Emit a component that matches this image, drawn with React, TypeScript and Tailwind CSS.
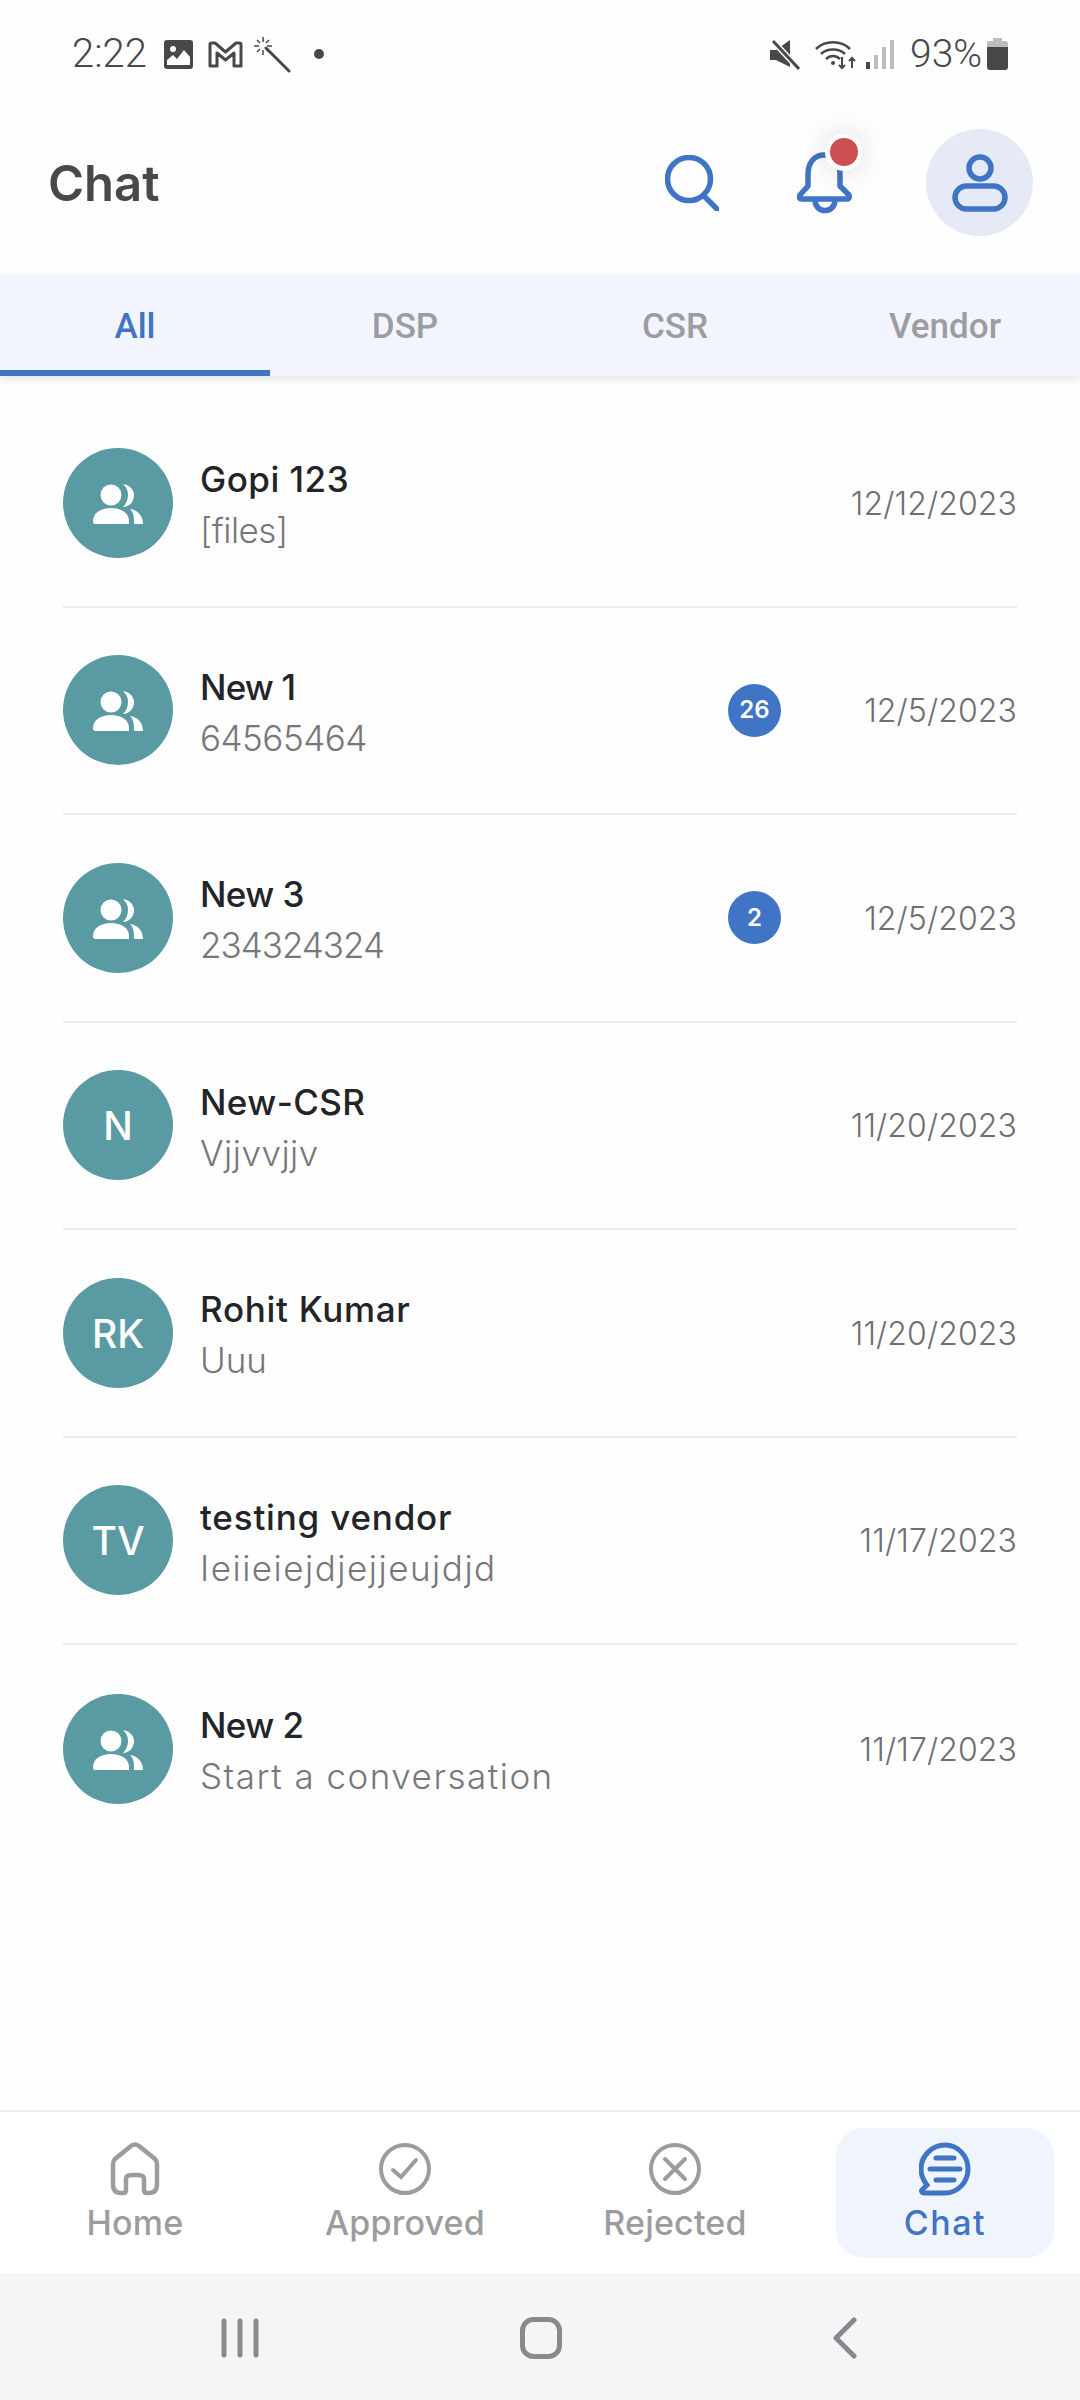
import React from 'react';

const chats = [
  { name: 'Gopi 123', sub: '[files]', date: '12/12/2023', nameTrack: 'tracking-[0.5px]', subTrack: 'tracking-[-0.5px]' },
  { name: 'New 1', sub: '64565464', date: '12/5/2023', badge: '26', nameTrack: 'tracking-[-0.8px]', subTrack: 'tracking-[-0.5px]' },
  { name: 'New 3', sub: '234324324', date: '12/5/2023', badge: '2', nameTrack: 'tracking-[-0.6px]', subTrack: 'tracking-[-1px]' },
  { name: 'New-CSR', sub: 'Vjjvvjjv', date: '11/20/2023', initials: 'N', nameTrack: 'tracking-[0.4px]', subTrack: 'tracking-[0.5px]' },
  { name: 'Rohit Kumar', sub: 'Uuu', date: '11/20/2023', initials: 'RK', nameTrack: 'tracking-[0.7px]', subTrack: 'tracking-[0px]' },
  { name: 'testing vendor', sub: 'Ieiieiejdjejjeujdjd', date: '11/17/2023', initials: 'TV', nameTrack: 'tracking-[0.8px]', subTrack: 'tracking-[1.5px]' },
  { name: 'New 2', sub: 'Start a conversation', date: '11/17/2023', nameTrack: 'tracking-[-0.6px]', subTrack: 'tracking-[1.5px]' },
];

function GroupIcon(): React.ReactElement {
  return (
    <svg width="50" height="40" viewBox="0 0 50 40" fill="#ffffff">
      <circle cx="18" cy="11" r="10.5" />
      <path d="M2 40Q0 40 0 37C0 29 8 24 18 24C28 24 36 29 36 37V40Z" />
      <path d="M30 0C36 1 41 5 41 11C41 18 36 23 30 23C33 20 35 16 35 11C35 6 33 3 30 0Z" />
      <path d="M37 25C44 26 50 31 50 40H41C41 33 41 29 37 25Z" />
    </svg>
  );
}

function StatusLeft(): React.ReactElement {
  return (
    <div className="flex items-center">
      <span className="ml-[72px] w-[92px] text-[40px] leading-none text-[#48484a] font-['Roboto',sans-serif] font-light">2:22</span>
      <svg width="29" height="29" viewBox="0 0 29 29" className="mr-[15px]">
        <rect width="29" height="29" rx="3" fill="#48484a" />
        <circle cx="9" cy="9" r="3" fill="#fff" />
        <path d="M3 25V20L9 15L13 19L20 10L26 17V25Z" fill="#fff" />
      </svg>
      <svg width="35" height="27" viewBox="0 0 35 27" fill="none" stroke="#48484a" strokeWidth="3" strokeLinejoin="round" className="mr-[10px]">
        <path d="M2 3Q2 2 4 2H7L17.500 11L28 2H31Q33 2 33 3V25H26V12L17.500 19L9 12V25H2Z" />
      </svg>
      <svg width="38" height="37" viewBox="0 0 38 37" fill="none" stroke="#48484a" className="mr-[23px]">
        <path d="M13 12L36 35" strokeWidth="3" strokeLinecap="round" />
        <path d="M10 1V6M10 14V19M1 10H6M14 10H19M4 4L7 7M13 13L16 16M16 4L13 7M4 16L7 13" strokeWidth="1.500" />
      </svg>
      <span className="w-[10px] h-[10px] rounded-full bg-[#48484a]" />
    </div>
  );
}

function StatusRight(): React.ReactElement {
  return (
    <div className="flex items-center mr-[72px]">
      <svg width="30" height="31" viewBox="0 0 30 31" className="mr-[15px]">
        <path d="M0 11H6L20 1V28L6 21H0Z" fill="#48484a" />
        <path d="M3 2L29 30" stroke="#fff" strokeWidth="6" />
        <path d="M3 2L29 30" stroke="#48484a" strokeWidth="3" />
      </svg>
      <svg width="42" height="31" viewBox="0 0 42 31" fill="none" stroke="#48484a" strokeWidth="2.500" className="mr-[9px]">
        <path d="M1 10C10 1 26 1 35 10" />
        <path d="M6 15C12 9 24 9 30 15" />
        <path d="M11 20C15 16 21 16 25 20" />
        <circle cx="18" cy="24" r="2" fill="#48484a" stroke="none" />
        <path d="M27 18V29M24 26L27 29L30 26M37 29V19M34 22L37 19L40 22" strokeWidth="2" />
      </svg>
      <div className="flex items-end gap-[4px] h-[29px] mr-[16px]">
        <span className="w-[4px] h-[7px] bg-[#48484a]" />
        <span className="w-[4px] h-[14px] bg-[#bdbdbf]" />
        <span className="w-[4px] h-[22px] bg-[#bdbdbf]" />
        <span className="w-[4px] h-[29px] bg-[#bdbdbf]" />
      </div>
      <span className="w-[77px] text-[39px] leading-none text-[#48484a] font-['Roboto',sans-serif] font-light">93%</span>
      <svg width="21" height="32" viewBox="0 0 21 32">
        <path d="M6 0H15V3H19Q21 3 21 5V9H0V5Q0 3 2 3H6Z" fill="#bdbdbf" />
        <path d="M0 9H21V29Q21 32 18 32H3Q0 32 0 29Z" fill="#48484a" />
      </svg>
    </div>
  );
}

function NavItem({ label, active, children }: { label: string; active?: boolean; children: React.ReactNode }): React.ReactElement {
  return (
    <div className="flex justify-center">
      <div className={`w-[218px] h-[130px] rounded-[28px] pt-[14px] flex flex-col items-center ${active ? 'bg-[#f0f4fc] text-[#3f75c4] tracking-[1.5px]' : 'text-[#9c9c9f] tracking-[0.2px]'}`}>
        <div className="h-[54px] flex items-center">{children}</div>
        <span className="mt-[7px] text-[34px] leading-[40px] font-medium font-['Inter',sans-serif]">{label}</span>
      </div>
    </div>
  );
}

export default function App(): React.ReactElement {
  return (
    <div className="w-[1080px] h-[2400px] flex flex-col bg-[#fefefe] overflow-hidden font-['Inter',sans-serif]">
      <div className="h-[108px] flex items-center justify-between">
        <StatusLeft />
        <StatusRight />
      </div>

      <div className="h-[167px] flex items-center pl-[48px] pr-[47px] pb-[18px]">
        <h1 className="flex-1 text-[49px] font-semibold text-[#48484a] leading-none pt-[2px]">Chat</h1>
        <svg width="54" height="56" viewBox="0 0 54 56" fill="none" stroke="#3f75c4" strokeWidth="5.500" strokeLinecap="round" className="mr-[78px]">
          <circle cx="24" cy="24" r="21.500" />
          <path d="M39 41L52 54" />
        </svg>
        <div className="relative w-[56px] h-[62px] mr-[73px]">
          <svg width="56" height="62" viewBox="0 0 56 62" fill="none" stroke="#3f75c4" strokeWidth="5.500" strokeLinejoin="round">
            <path d="M11 34V22C11 10 18 3 27 3C36 3 43 10 43 22V34L52 43Q53 47 50 47H5Q1 47 3 43Z" />
            <path d="M18 48C18 62 38 62 38 48" />
          </svg>
          <span className="absolute left-[28px] top-[-18px] w-[37px] h-[37px] rounded-full bg-white flex items-center justify-center shadow-[0_0_30px_rgba(0,0,0,0.14)]">
            <span className="w-[28px] h-[28px] rounded-full bg-[#cc4f52]" />
          </span>
        </div>
        <div className="w-[107px] h-[107px] rounded-full bg-[#e6eaf6] flex items-center justify-center">
          <svg width="56" height="58" viewBox="0 0 56 58" fill="none" stroke="#3f75c4" strokeWidth="5.500">
            <circle cx="28" cy="14" r="11" />
            <rect x="3" y="32" width="50" height="23" rx="11.500" />
          </svg>
        </div>
      </div>

      <div className="relative h-[101px] grid grid-cols-4 bg-[#f2f5fd] shadow-[0_3px_8px_rgba(0,0,0,0.1)] font-['Roboto',sans-serif] text-[35px] font-medium">
        <div className="flex items-center justify-center text-[#3f75c4] border-b-[6px] border-[#3f75c4] pt-[9px]">All</div>
        <div className="flex items-center justify-center text-[#9c9da3] pt-[3px]">DSP</div>
        <div className="flex items-center justify-center text-[#9c9da3] pt-[3px]">CSR</div>
        <div className="flex items-center justify-center text-[#9c9da3] pt-[3px]">Vendor</div>
      </div>

      <div className="flex-1 pt-[24px] px-[63px]">
        {chats.map((chat, i) => (
          <div key={chat.name} className={`h-[207.5px] flex items-center ${i < chats.length - 1 ? 'border-b-2 border-[#ebebee]' : ''}`}>
            <div className="w-[110px] h-[110px] rounded-full bg-[#5a9aa3] flex items-center justify-center text-white text-[39px] font-medium pt-[2px]">
              {chat.initials ?? <GroupIcon />}
            </div>
            <div className="flex-1 ml-[27px] pt-[5px]">
              <div className={`text-[35px] leading-[51px] font-medium text-[#222428] ${chat.nameTrack}`}>{chat.name}</div>
              <div className={`text-[35px] leading-[51px] font-light text-[#77777b] ${chat.subTrack}`}>{chat.sub}</div>
            </div>
            {chat.badge && (
              <span className="w-[53px] h-[53px] rounded-full bg-[#3f75c4] text-white text-[24px] font-semibold flex items-center justify-center">{chat.badge}</span>
            )}
            <div className="w-[236px] text-right text-[32px] font-light text-[#6f6f73] tracking-[0.1px] pt-[2px]">{chat.date}</div>
          </div>
        ))}
      </div>

      <div className="h-[163px] border-t-2 border-[#ebebee] bg-white pt-[16px] grid grid-cols-4">
        <NavItem label="Home">
          <svg width="50" height="54" viewBox="0 0 50 54" fill="none" stroke="currentColor" strokeWidth="4.500">
            <path d="M3 22Q3 19 5 17L21 4Q25 1 29 4L45 17Q47 19 47 22V42Q47 51 39 51H37Q34 51 34 48V37Q34 33 28 33H22Q16 33 16 37V48Q16 51 13 51H11Q3 51 3 42Z" />
          </svg>
        </NavItem>
        <NavItem label="Approved">
          <svg width="52" height="54" viewBox="0 0 52 54" fill="none" stroke="currentColor" strokeWidth="4" strokeLinecap="round">
            <circle cx="26" cy="27" r="24" />
            <path d="M14 28L22 35L37 18" />
          </svg>
        </NavItem>
        <NavItem label="Rejected">
          <svg width="52" height="54" viewBox="0 0 52 54" fill="none" stroke="currentColor" strokeWidth="4" strokeLinecap="round">
            <circle cx="26" cy="27" r="24" />
            <path d="M16 17L36 37M36 17L16 37" />
          </svg>
        </NavItem>
        <NavItem label="Chat" active>
          <svg width="52" height="54" viewBox="0 0 52 54" fill="none" stroke="currentColor" strokeWidth="5" strokeLinecap="round">
            <path d="M26 3C39 3 49 14 49 27C49 40 39 51 26 51H5C3 51 2 49 3 48L8 43C4 38 2 33 2 27C2 14 13 3 26 3Z" />
            <path d="M17 16H35M11 27H41M17 38H35" />
          </svg>
        </NavItem>
      </div>

      <div className="h-[127px] bg-[#f5f4f7] grid grid-cols-3 pt-[3px]">
        <div className="flex items-center justify-end pr-[101px]">
          <svg width="38" height="40" viewBox="0 0 38 40" stroke="#8a8a8c" strokeWidth="5" strokeLinecap="round">
            <path d="M3 3V37M19 3V37M35 3V37" />
          </svg>
        </div>
        <div className="flex items-center justify-center pl-[2px]">
          <svg width="42" height="42" viewBox="0 0 42 42" fill="none" stroke="#8a8a8c" strokeWidth="5">
            <rect x="2.500" y="2.500" width="37" height="37" rx="11" />
          </svg>
        </div>
        <div className="flex items-center pl-[113px]">
          <svg width="24" height="42" viewBox="0 0 24 42" fill="none" stroke="#8a8a8c" strokeWidth="5" strokeLinecap="round" strokeLinejoin="round">
            <path d="M21 3L3 21L21 39" />
          </svg>
        </div>
      </div>
    </div>
  );
}
